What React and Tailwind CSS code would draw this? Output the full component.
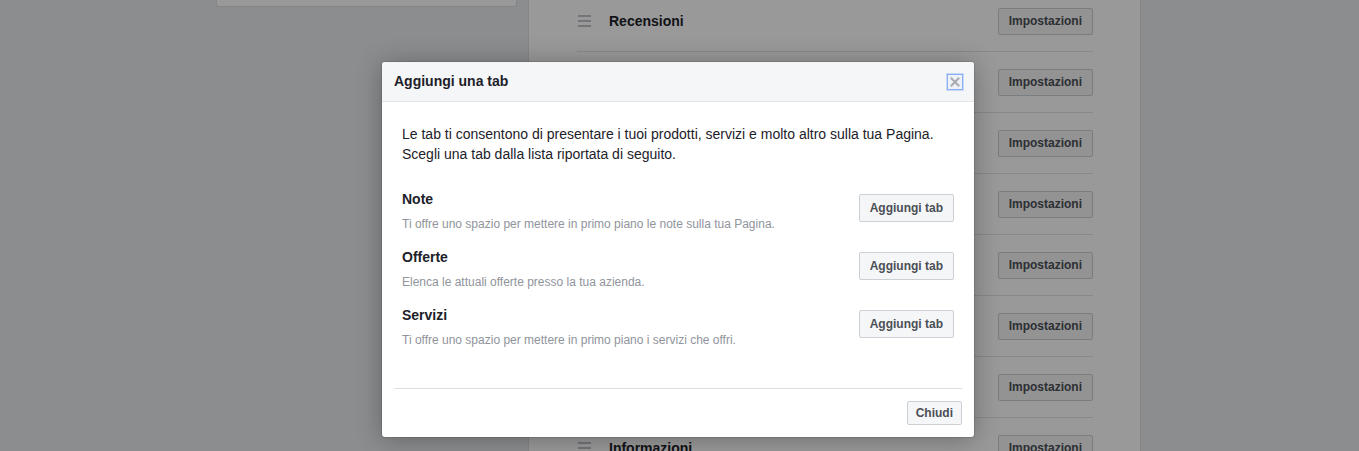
import React from "react";

const rows = [
  "Recensioni",
  "Foto",
  "Video",
  "Eventi",
  "Post",
  "Community",
  "Gruppi",
  "Informazioni",
];

const items = [
  {
    title: "Note",
    desc: "Ti offre uno spazio per mettere in primo piano le note sulla tua Pagina.",
  },
  {
    title: "Offerte",
    desc: "Elenca le attuali offerte presso la tua azienda.",
  },
  {
    title: "Servizi",
    desc: "Ti offre uno spazio per mettere in primo piano i servizi che offri.",
  },
];

function Hamburger() {
  return (
    <div className="ml-px flex w-[13px] flex-col gap-[3px]">
      <div className="h-[2px] bg-[#bec2c9]" />
      <div className="h-[2px] bg-[#bec2c9]" />
      <div className="h-[2px] bg-[#bec2c9]" />
    </div>
  );
}

export default function App() {
  return (
    <div
      className="relative h-[451px] w-full overflow-hidden bg-[#e9ebee]"
      style={{ fontFamily: '"Liberation Sans", Arial, Helvetica, sans-serif' }}
    >
      {/* underlying page */}
      <div className="ml-[216px] flex h-full gap-[11px]">
        <div className="w-[301px]">
          <div className="h-[7px] rounded-b-[3px] border border-t-0 border-[#dddfe2] bg-white" />
        </div>
        <div className="h-full w-[613px] border-x border-[#dddfe2] bg-white pl-[48px] pr-[47px]">
          <div className="-mt-[9px]">
            {rows.map((r) => (
              <div
                key={r}
                className="flex h-[61px] items-center border-b border-[#e5e5e5]"
              >
                <Hamburger />
                <div className="ml-[18px] flex-1 text-[14px] font-bold text-[#1d2129]">
                  {r}
                </div>
                <button className="h-[27px] rounded-[2px] border border-[#ccd0d5] bg-[#f5f6f7] px-[10px] text-[12px] font-bold text-[#4b4f56]">
                  Impostazioni
                </button>
              </div>
            ))}
          </div>
        </div>
      </div>

      {/* dim overlay */}
      <div className="absolute inset-0 bg-black/40" />

      {/* dialog */}
      <div className="absolute left-[382px] top-[62px] w-[592px] overflow-hidden rounded-[3px] bg-white shadow-[0_2px_26px_rgba(0,0,0,0.3),0_0_0_1px_rgba(0,0,0,0.1)]">
        <div className="flex h-[40px] items-center justify-between border-b border-[#e5e5e5] bg-[#f5f6f7] pl-[12px] pr-[11px]">
          <div className="text-[14px] font-bold text-[#1d2129]">
            Aggiungi una tab
          </div>
          <div className="flex h-[16px] w-[16px] items-center justify-center border border-[#8ab0f7] bg-[#eef1f6] shadow-[0_0_0_1px_rgba(120,160,245,0.35)]">
            <svg width="10" height="10" viewBox="0 0 10 10">
              <path
                d="M1.5 1.5 L8.5 8.5 M8.5 1.5 L1.5 8.5"
                stroke="#a8abb1"
                strokeWidth="2"
                strokeLinecap="square"
              />
            </svg>
          </div>
        </div>

        <div className="px-[20px] pb-[40px] pt-[22px]">
          <p className="text-[14px] leading-[20px] text-[#1d2129]">
            Le tab ti consentono di presentare i tuoi prodotti, servizi e molto
            altro sulla tua Pagina.
            <br />
            Scegli una tab dalla lista riportata di seguito.
          </p>
          <div className="mt-[26px] flex flex-col gap-[16px]">
            {items.map((it) => (
              <div key={it.title} className="flex items-start justify-between">
                <div>
                  <div className="text-[14px] font-bold leading-[18px] text-[#1d2129]">
                    {it.title}
                  </div>
                  <div className="mt-[8px] text-[12px] leading-[16px] text-[#90949c]">
                    {it.desc}
                  </div>
                </div>
                <button className="mt-[4px] h-[28px] rounded-[2px] border border-[#ccd0d5] bg-[#f5f6f7] px-[10px] text-[12px] font-bold text-[#4b4f56]">
                  Aggiungi tab
                </button>
              </div>
            ))}
          </div>
        </div>

        <div className="mx-[12px] border-t border-[#dddfe2]" />
        <div className="flex justify-end px-[12px] py-[12px]">
          <button className="h-[24px] rounded-[2px] border border-[#ccd0d5] bg-[#f5f6f7] px-[8px] text-[12px] font-bold text-[#4b4f56]">
            Chiudi
          </button>
        </div>
      </div>
    </div>
  );
}
